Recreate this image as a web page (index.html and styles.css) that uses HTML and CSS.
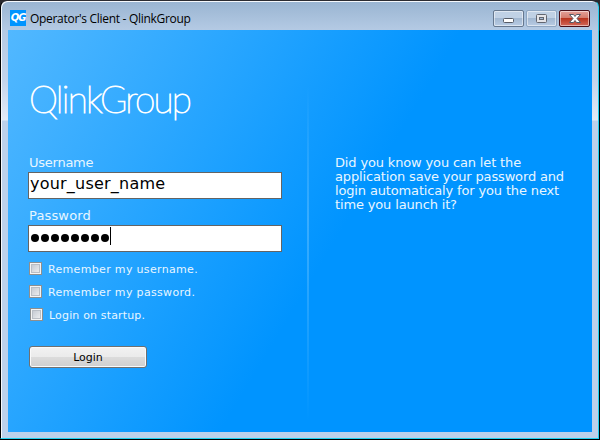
FILE: index.html
```html
<!DOCTYPE html>
<html lang="en">
<head>
<meta charset="utf-8">
<title>Operator's Client - QlinkGroup</title>
<link rel="stylesheet" href="styles.css">
</head>
<body>
<div class="window">
  <header class="titlebar">
    <span class="app-icon"><span>QG</span></span>
    <span class="title">Operator's Client - QlinkGroup</span>
    <div class="controls">
      <span class="control minimize"><svg width="30" height="16" viewBox="0 0 30 16"><rect x="9.500" y="8.500" width="10" height="4" rx="1" fill="#fff" stroke="#565b66"/></svg></span>
      <span class="control maximize"><svg width="30" height="16" viewBox="0 0 30 16"><rect x="9.500" y="4.500" width="10" height="8" rx="1" fill="#e4e4e8" stroke="#626670"/><rect x="12.500" y="7.500" width="4" height="2" fill="#a5bad5" stroke="#626670"/></svg></span>
      <span class="control close"><svg width="30" height="16" viewBox="0 0 30 16"><path d="M9.500 4.500H13.500L15 6.500L16.500 4.500H20.500L17 8.500L20.500 12.500H16.500L15 10.500L13.500 12.500H9.500L13 8.500Z" fill="#fff" stroke="#565b66"/></svg></span>
    </div>
  </header>
  <main class="client">
    <section class="login">
      <div class="logo">QlinkGroup</div>
      <label class="field-label user-label">Username</label>
      <div class="field">your_user_name</div>
      <label class="field-label pass-label">Password</label>
      <div class="field password"><i></i><i></i><i></i><i></i><i></i><i></i><i></i><i></i><b class="caret"></b></div>
      <div class="options">
        <div class="option"><span class="box"></span><span class="option-text">Remember my username.</span></div>
        <div class="option"><span class="box"></span><span class="option-text">Remember my password.</span></div>
        <div class="option startup"><span class="box"></span><span class="option-text">Login on startup.</span></div>
      </div>
      <div class="button">Login</div>
    </section>
    <div class="divider"></div>
    <p class="tip">Did you know you can let the<br>application save your password and<br>login automaticaly for you the next<br>time you launch it?</p>
  </main>
</div>
</body>
</html>
```
FILE: styles.css
```css
* { box-sizing: border-box; }
body {
  margin: 0;
  width: 600px;
  height: 440px;
  overflow: hidden;
  background: linear-gradient(#29292e 0, #302830 30px, #000 31px);
  font-family: "DejaVu Sans", Verdana, sans-serif;
}
.window {
  margin: 0;
  width: 599px;
  height: 439px;
  border: 1px solid #20d0ef;
  border-top-color: #2b2b31;
  border-left-color: #000;
  border-radius: 7px 7px 0 0;
  padding: 0 6px 6px;
  box-shadow: inset 1px 1px 0 #f5f8fc;
  background: linear-gradient(#99b4d1 0, #b4cae4 29px, #c3d4eb 80px, #e3ebf6 119px, #bcd1ea 120px);
}
.titlebar {
  height: 29px;
  display: flex;
  align-items: flex-start;
  padding: 9px 0 0 3px;
}
.app-icon {
  width: 16px;
  height: 16px;
  background: #0094ff;
  color: #fff;
  font: italic 700 10px/16px "DejaVu Sans", sans-serif;
  letter-spacing: -1px;
  display: flex;
  justify-content: center;
}
.title {
  margin-left: 4px;
  font: 12px/18px "Open Sans", sans-serif;
  letter-spacing: -0.3px;
  color: #000;
  white-space: nowrap;
}
.controls { margin-left: auto; display: flex; gap: 2px; padding-right: 2px; }
.control {
  width: 31px;
  height: 17px;
  border: 1px solid #66788f;
  border-radius: 2px;
  box-shadow: inset 0 0 0 1px rgba(255,255,255,.5);
  background: linear-gradient(#c0d1e5 0 48%, #a2b8d2 50%, #b8cce4);
  display: flex;
  align-items: center;
  justify-content: center;
}
.control svg { flex: none; margin-top: -2px; }
.maximize { border-color: #8da5c1; }
.close {
  border-color: #480f18;
  background: linear-gradient(#e3a199 0, #d47b6c 47%, #b9351f 50%, #d3685a);
}
.client {
  height: 402px;
  display: flex;
  margin-left: 1px;
  width: 584px;
  background: linear-gradient(121deg, #52b8ff 0, #0094ff 55%);
  color: #e8f6ff;
}
.login { width: 299px; padding: 49px 0 0 20px; }
.logo {
  height: 77px;
  padding-left: 1px;
  font: 100 37px/40px Lato, sans-serif;
  letter-spacing: -1.75px;
  -webkit-text-stroke: 1.1px #fff;
  color: #fff;
  white-space: nowrap;
}
.field-label {
  display: block;
  height: 16px;
  padding-left: 1px;
  font-size: 13px;
  line-height: 14px;
  letter-spacing: -0.25px;
}
.pass-label { letter-spacing: 0.15px; }
.field {
  width: 254px;
  height: 27px;
  border: 1px solid #646464;
  background: #fff;
  color: #000;
  padding-left: 1px;
  font-size: 16px;
  line-height: 22px;
  letter-spacing: 0.22px;
}
.pass-label { margin-top: 10px; }
.password { display: flex; padding: 1px 0 0 2px; }
.password i { width: 8px; height: 8px; border-radius: 50%; background: #000; margin: 7px 2px 0 0; }
.caret { width: 1px; height: 18px; background: #000; margin-left: -1px; }
.options { margin-top: 10px; }
.option { display: flex; height: 23px; padding-left: 1px; }
.box {
  width: 13px;
  height: 13px;
  border: 1px solid #8e8f8f;
  background: linear-gradient(135deg, #bcc2cc, #f5f5f5);
  box-shadow: inset 0 0 0 1px #f4f4f4, inset 0 0 0 2px #b9bec5;
}
.option-text { margin-left: 6px; font-size: 11px; line-height: 16px; letter-spacing: 0.33px; }
.startup { padding-left: 2px; }
.startup .option-text { letter-spacing: 0.16px; }
.button {
  margin: 15px 0 0 1px;
  width: 118px;
  height: 22px;
  border: 1px solid #707070;
  border-radius: 3px;
  box-shadow: inset 0 0 0 1px #fafafa;
  background: linear-gradient(#f2f2f2 0, #ebebeb 49%, #dcdcdc 50%, #cfcfcf);
  color: #000;
  font-size: 11px;
  line-height: 21px;
  text-align: center;
}
.divider {
  width: 2px;
  height: 335px;
  margin-top: 56px;
  background: linear-gradient(transparent, rgba(130,205,255,.4) 40%, rgba(130,205,255,.35) 55%, transparent);
}
.tip { margin: 126px 0 0 26px; font-size: 13px; line-height: 14px; letter-spacing: -0.15px; white-space: nowrap; }
```
